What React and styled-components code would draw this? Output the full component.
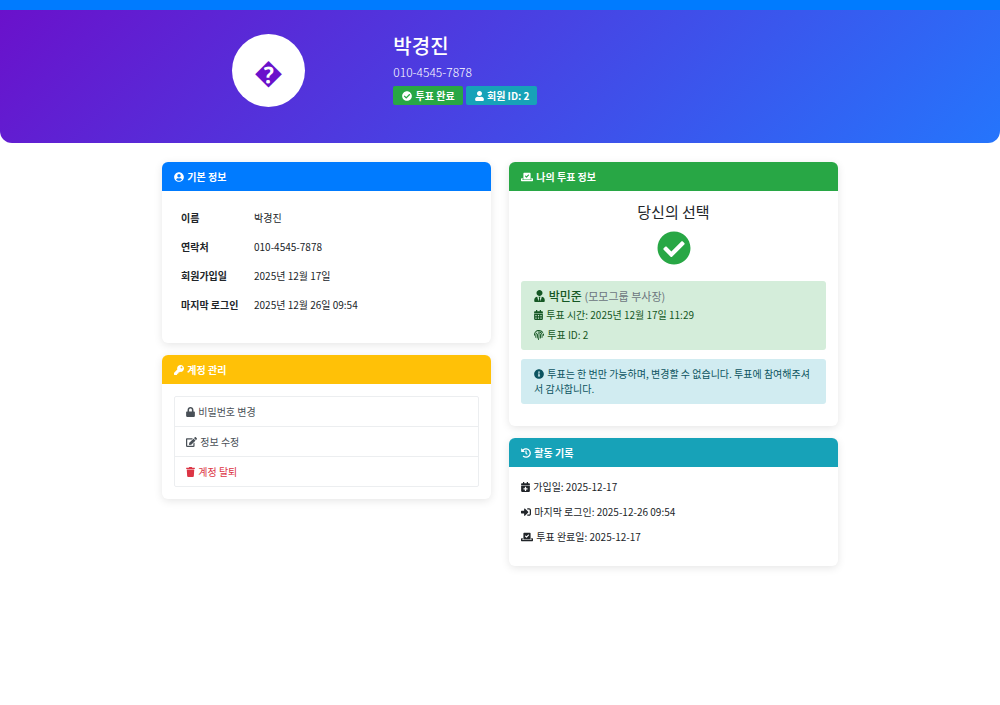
import React from 'react'
import styled, {createGlobalStyle} from "styled-components";
import {
    FaCalendarAlt, FaCalendarPlus, FaCheckCircle, FaEdit, FaFingerprint, FaHistory, FaInfoCircle,
    FaKey, FaLock, FaSignInAlt, FaTrash, FaUser, FaUserCircle, FaUserTie, FaVoteYea
} from "react-icons/fa";

const GlobalStyle = createGlobalStyle`
    * {
        box-sizing: border-box;
    }

    body {
        margin: 0;
        background: #fff;
        color: #212529;
        font-family: "Noto Sans CJK KR", "Noto Sans", sans-serif;
        font-size: 10px;
        line-height: 15px;
    }

    h1, h2, h3, p, ul {
        margin: 0;
        padding: 0;
        font-size: inherit;
    }
`;
const Icon = styled.span`
    display: inline-block;
    margin-right: 1px;
    vertical-align: -1px;

    svg {
        display: block;
        width: ${props => props.$width || 10}px;
        height: ${props => props.$height || 10}px;
    }
`;
const TopBar = styled.div`
    height: 10px;
    background: #007bff;
`;
const ProfileHeader = styled.header`
    padding: 24px 0 36px;
    border-radius: 0 0 12px 12px;
    background: linear-gradient(135deg, #6a11cb 0%, #2575fc 100%);
    color: #fff;
`;
const Container = styled.div`
    max-width: 694px;
    margin: 0 auto;
    padding: 0 9px;
`;
const Row = styled.div`
    display: flex;
    margin: 0 -9px;
`;
const Col = styled.div`
    width: calc(100% / 12 * ${props => props.$span});
    padding: 0 9px;
`;
const Avatar = styled.div`
    display: flex;
    align-items: center;
    justify-content: center;
    width: 73px;
    height: 73px;
    margin: 0 auto;
    padding-top: 4px;
    border-radius: 50%;
    background: #fff;
    color: #6a11cb;
    font-family: "Liberation Sans", sans-serif;
    font-size: 29px;
    line-height: 44px;
`;
const Name = styled.h1`
    margin-bottom: 5px;
    font-size: 20px;
    font-weight: 500;
    line-height: 24px;
`;
const Phone = styled.p`
    margin-bottom: 5px;
    font-size: 12px;
    font-weight: 300;
    line-height: 18px;
`;
const Badges = styled.div`
    display: flex;
    gap: 3px;
`;
const Badge = styled.span`
    padding: 2px 8px 2px 9px;
    border-radius: 2px;
    background: ${props => props.$color};
    font-weight: 700;
`;
const Main = styled.main`
    padding: 19px 0;
`;
const Card = styled.section`
    margin-bottom: 12px;
    border-radius: 6px;
    background: #fff;
    box-shadow: 0 2px 9px rgba(0, 0, 0, .1);
    overflow: hidden;
`;
const CardHeader = styled.h2`
    padding: 7px 12px;
    background: ${props => props.$color};
    color: #fff;
    font-weight: 700;
`;
const CardBody = styled.div`
    padding: 12px 12px ${props => props.$bottom || 12}px;
`;
const InfoTable = styled.table`
    width: 100%;
    border-collapse: collapse;

    th, td {
        padding: 7px;
        text-align: left;
    }

    th {
        width: 73px;
        white-space: nowrap;
    }
`;
const MenuList = styled.ul`
    border: 1px solid #eceef0;
    border-radius: 2px;
    list-style: none;

    li + li {
        border-top: 1px solid #eceef0;
    }
`;
const MenuLink = styled.a`
    display: block;
    padding: 7px 11px;
    color: ${props => props.$danger ? '#dc3545' : '#495057'};
    text-decoration: none;
`;
const Choice = styled.div`
    margin-bottom: 16px;
    color: #28a745;
    text-align: center;

    h3 {
        margin-bottom: 10px;
        color: #212529;
        font-size: 15px;
        font-weight: 400;
        line-height: 18px;
    }

    svg {
        display: block;
        margin: 0 auto;
    }
`;
const Alert = styled.div`
    margin-bottom: 9px;
    padding: 7px 13px 8px;
    border-radius: 3px;
    background: ${props => props.$success ? '#d4edda' : '#d1ecf1'};
    color: ${props => props.$success ? '#155724' : '#0c5460'};

    h3 {
        margin-bottom: 3px;
        font-size: 12px;
        font-weight: 500;
        line-height: 16px;
    }

    small {
        color: #6c757d;
        font-size: 11px;
        font-weight: 400;
    }

    p + p {
        margin-top: 5px;
    }
`;
const HistoryList = styled.ul`
    list-style: none;

    li {
        margin-bottom: 10px;
    }
`;

const App = () => {
    return (
        <>
            <GlobalStyle />
            <TopBar />
            <ProfileHeader>
                <Container>
                    <Row>
                        <Col $span={4}>
                            <Avatar>{'\uFFFD'}</Avatar>
                        </Col>
                        <Col $span={8}>
                            <Name>박경진</Name>
                            <Phone>010-4545-7878</Phone>
                            <Badges>
                                <Badge $color="#28a745"><Icon><FaCheckCircle /></Icon> 투표 완료</Badge>
                                <Badge $color="#17a2b8"><Icon $width={9}><FaUser /></Icon> 회원 ID: 2</Badge>
                            </Badges>
                        </Col>
                    </Row>
                </Container>
            </ProfileHeader>
            <Main>
                <Container>
                    <Row>
                        <Col $span={6}>
                            <Card>
                                <CardHeader $color="#007bff"><Icon><FaUserCircle /></Icon> 기본 정보</CardHeader>
                                <CardBody $bottom={24}>
                                    <InfoTable>
                                        <tbody>
                                            <tr>
                                                <th scope="row">이름</th>
                                                <td>박경진</td>
                                            </tr>
                                            <tr>
                                                <th scope="row">연락처</th>
                                                <td>010-4545-7878</td>
                                            </tr>
                                            <tr>
                                                <th scope="row">회원가입일</th>
                                                <td>2025년 12월 17일</td>
                                            </tr>
                                            <tr>
                                                <th scope="row">마지막 로그인</th>
                                                <td>2025년 12월 26일 09:54</td>
                                            </tr>
                                        </tbody>
                                    </InfoTable>
                                </CardBody>
                            </Card>
                            <Card>
                                <CardHeader $color="#ffc107"><Icon><FaKey /></Icon> 계정 관리</CardHeader>
                                <CardBody>
                                    <MenuList>
                                        <li><MenuLink href="#password"><Icon $width={9}><FaLock /></Icon> 비밀번호 변경</MenuLink></li>
                                        <li><MenuLink href="#edit"><Icon $width={11}><FaEdit /></Icon> 정보 수정</MenuLink></li>
                                        <li><MenuLink href="#withdraw" $danger><Icon $width={9}><FaTrash /></Icon> 계정 탈퇴</MenuLink></li>
                                    </MenuList>
                                </CardBody>
                            </Card>
                        </Col>
                        <Col $span={6}>
                            <Card>
                                <CardHeader $color="#28a745"><Icon $width={12}><FaVoteYea /></Icon> 나의 투표 정보</CardHeader>
                                <CardBody $bottom={13}>
                                    <Choice>
                                        <h3>당신의 선택</h3>
                                        <FaCheckCircle size={34} />
                                    </Choice>
                                    <Alert $success>
                                        <h3><Icon $width={11} $height={12}><FaUserTie /></Icon> 박민준 <small>(모모그룹 부사장)</small></h3>
                                        <p><Icon $width={9}><FaCalendarAlt /></Icon> 투표 시간: 2025년 12월 17일 11:29</p>
                                        <p><Icon><FaFingerprint /></Icon> 투표 ID: 2</p>
                                    </Alert>
                                    <Alert>
                                        <Icon><FaInfoCircle /></Icon> 투표는 한 번만 가능하며, 변경할 수 없습니다. 투표에 참여해주셔서 감사합니다.
                                    </Alert>
                                </CardBody>
                            </Card>
                            <Card>
                                <CardHeader $color="#17a2b8"><Icon><FaHistory /></Icon> 활동 기록</CardHeader>
                                <CardBody>
                                    <HistoryList>
                                        <li><Icon $width={9}><FaCalendarPlus /></Icon> 가입일: 2025-12-17</li>
                                        <li><Icon><FaSignInAlt /></Icon> 마지막 로그인: 2025-12-26 09:54</li>
                                        <li><Icon $width={12}><FaVoteYea /></Icon> 투표 완료일: 2025-12-17</li>
                                    </HistoryList>
                                </CardBody>
                            </Card>
                        </Col>
                    </Row>
                </Container>
            </Main>
        </>
    )
}
export default App;
